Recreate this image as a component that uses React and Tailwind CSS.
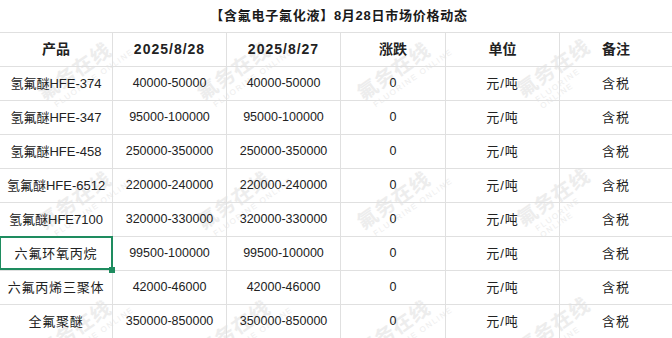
const rows = [
  ["氢氟醚HFE-374", "40000-50000", "40000-50000"],
  ["氢氟醚HFE-347", "95000-100000", "95000-100000"],
  ["氢氟醚HFE-458", "250000-350000", "250000-350000"],
  ["氢氟醚HFE-6512", "220000-240000", "220000-240000"],
  ["氢氟醚HFE7100", "320000-330000", "320000-330000"],
  ["六氟环氧丙烷", "99500-100000", "99500-100000"],
  ["六氟丙烯三聚体", "42000-46000", "42000-46000"],
  ["全氟聚醚", "350000-850000", "350000-850000"],
];

const marks = [
  [78, 76], [237, 76], [397, 76], [559, 76],
  [78, 205], [237, 205], [397, 205], [559, 205],
  [78, 334], [237, 334], [397, 334], [559, 334],
];

const cell =
  "h-[34px] flex items-center justify-center border-b border-r border-[#e0e0e0]";

const Watermark = ({ x, y }) => (
  <div
    className="absolute -translate-x-1/2 -translate-y-1/2 -rotate-[35deg] flex flex-col items-center leading-none select-none"
    style={{ left: x, top: y }}
  >
    <span className="text-[20px] font-bold tracking-[1px] text-[#ededed]">氟务在线</span>
    <span className="mt-[3px] ml-[24px] text-[8px] tracking-[1.5px] text-[#ededed]">
      FLUORINE ONLINE
    </span>
  </div>
);

const isCjkOnly = (s) => /^[\u4e00-\u9fff]+$/.test(s);

export default function App() {
  return (
    <div className="relative w-[672px] h-[338px] overflow-hidden bg-white font-['Liberation_Sans','Noto_Sans_CJK_SC',sans-serif] text-[#222]">
      <div className="absolute inset-0 pointer-events-none">
        {marks.map(([x, y], i) => (
          <Watermark key={i} x={x} y={y} />
        ))}
      </div>

      <div className="relative">
        <div className="h-[32px] flex items-center justify-center pl-[6px] text-[13px] font-bold tracking-[0.75px] text-[#1a1a1a]">
          【含氟电子氟化液】8月28日市场价格动态
        </div>

        <div className="grid grid-cols-[113px_114px_114px_105px_114px_112px] border-t border-[#e0e0e0]">
          <div className={`${cell} text-[14px] font-bold`}>产品</div>
          <div className={`${cell} text-[14px] font-bold tracking-[1px]`}>2025/8/28</div>
          <div className={`${cell} text-[14px] font-bold tracking-[1px]`}>2025/8/27</div>
          <div className={`${cell} text-[14px] font-bold`}>涨跌</div>
          <div className={`${cell} text-[14px] font-bold`}>单位</div>
          <div className={`${cell} border-r-0 text-[14px] font-bold`}>备注</div>

          {rows.map(([name, a, b]) => (
            <div key={name} className="contents">
              <div
                className={`${cell} text-[13px] ${isCjkOnly(name) ? "tracking-[0.8px]" : ""}`}
              >
                {name}
              </div>
              <div className={`${cell} text-[12.5px]`}>{a}</div>
              <div className={`${cell} text-[12.5px]`}>{b}</div>
              <div className={`${cell} text-[12.5px]`}>0</div>
              <div className={`${cell} text-[13px] tracking-[1px]`}>元/吨</div>
              <div className={`${cell} border-r-0 text-[13px] tracking-[1px]`}>含税</div>
            </div>
          ))}
        </div>
      </div>

      {/* selected cell */}
      <div className="absolute left-[-1px] top-[236px] w-[114px] h-[34px] border-2 border-[#1e8c5f] pointer-events-none" />
      <div className="absolute left-[109px] top-[267px] w-[6px] h-[6px] bg-[#1e8c5f]" />
    </div>
  );
}
